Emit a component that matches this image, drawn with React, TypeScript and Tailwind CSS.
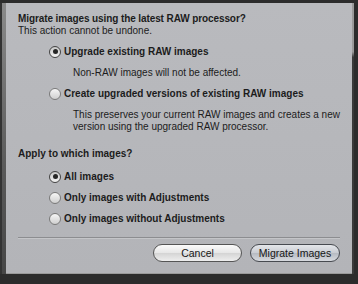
import React from "react";

function Radio({ checked }: { checked?: boolean }) {
  return (
    <span
      className={
        "relative inline-flex items-center justify-center w-[12px] h-[12px] rounded-full border shrink-0 " +
        (checked
          ? "border-[#444] bg-[linear-gradient(#c8c8c8,#f2f2f2)]"
          : "border-[#7a7a7a] bg-[linear-gradient(#f6f6f6,#cfcfcf)]")
      }
    >
      {checked && <span className="w-[5px] h-[5px] rounded-full bg-[#262626]" />}
    </span>
  );
}

function Option({ checked, label }: { checked?: boolean; label: string }) {
  return (
    <div className="flex items-center gap-[3px] h-[21px]">
      <Radio checked={checked} />
      <span className="font-bold">{label}</span>
    </div>
  );
}

export default function App() {
  return (
    <div
      className="w-[358px] h-[284px] bg-[#2c2c2c] pt-[3px] flex overflow-hidden"
      style={{ fontFamily: '"Liberation Sans", Arial, sans-serif' }}
    >
      <div className="w-[6px] h-[271px] flex">
        <div className="w-[2px] bg-[#333]" />
        <div className="w-[4px] bg-[linear-gradient(#8a8a8a,#5a5a5a_60%,#464646)]" />
      </div>
      <div className="w-[346px] h-[271px] bg-[linear-gradient(#b9babe,#b3b4b8)] border-b border-[#9a9a9a] text-[#1c1c1c] text-[10px] leading-[12px] flex flex-col pl-[12px] pr-[12px] pt-[10px]">
        <div className="font-bold tracking-[-0.1px]">Migrate images using the latest RAW processor?</div>
        <div>This action cannot be undone.</div>

        <div className="pl-[31px] mt-[4px] flex flex-col">
          <Option checked label="Upgrade existing RAW images" />
          <div className="pl-[24px] h-[21px] flex items-center">Non-RAW images will not be affected.</div>
          <Option label="Create upgraded versions of existing RAW images" />
          <div className="pl-[24px] pt-[5px] flex flex-col">
            <span>This preserves your current RAW images and creates a new</span>
            <span>version using the upgraded RAW processor.</span>
          </div>
        </div>

        <div className="font-bold mt-[15px]">Apply to which images?</div>

        <div className="pl-[31px] mt-[6px] flex flex-col">
          <Option checked label="All images" />
          <Option label="Only images with Adjustments" />
          <Option label="Only images without Adjustments" />
        </div>

        <div className="mt-[8px] h-px bg-[#8c8d90] border-b border-[#c4c5c8] box-content" />

        <div className="flex justify-end gap-[8px] mt-[5px]">
          <button className="w-[89px] h-[18px] rounded-full border border-[#555] bg-[linear-gradient(#fbfbfb_0%,#e6e6e6_50%,#d4d4d4_51%,#eeeeee_100%)] text-[10.5px] leading-[16px] text-[#161616]">
            Cancel
          </button>
          <button className="w-[90px] h-[18px] rounded-full border border-[#474a50] bg-[linear-gradient(#e4e6ea_0%,#c9ccd2_50%,#b6bac1_51%,#d7dadf_100%)] text-[10.5px] leading-[16px] text-[#161616]">
            Migrate Images
          </button>
        </div>
      </div>
      <div className="w-[6px] h-[271px] flex">
        <div className="w-[2px] bg-[linear-gradient(#9a9a9a,#9a9a9a_18%,#3a3a3a_20%)]" />
        <div className="flex-1 bg-[#2c2c2c]" />
      </div>
    </div>
  );
}
